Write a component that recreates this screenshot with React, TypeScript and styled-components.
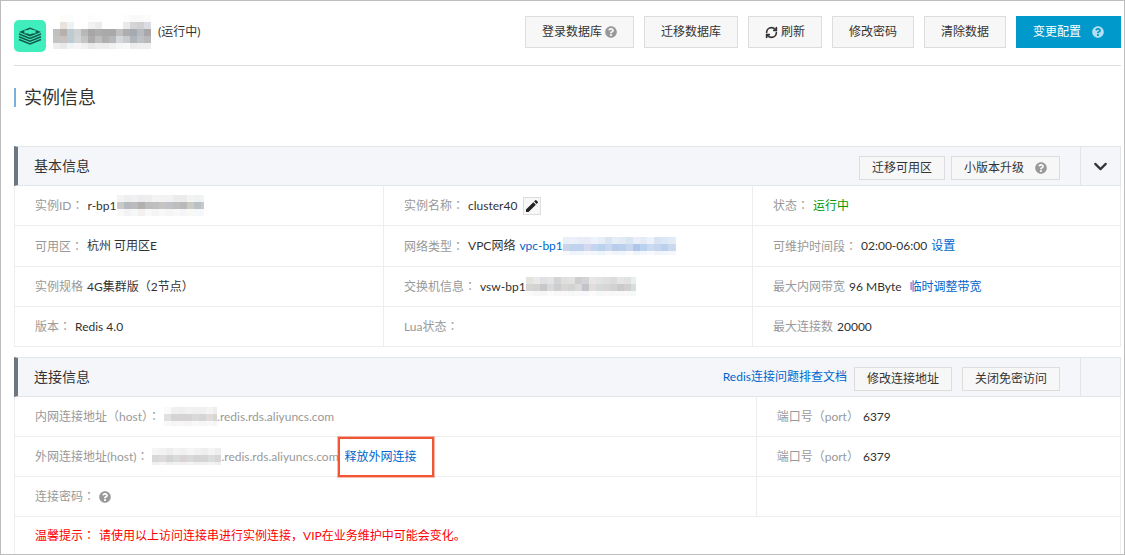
import React from 'react';
import styled, { createGlobalStyle } from 'styled-components';
import { FaQuestionCircle } from 'react-icons/fa';
import { MdEdit } from 'react-icons/md';
import { ChevronDown, RefreshCw } from 'lucide-react';

const GlobalStyle = createGlobalStyle`
  * { box-sizing: border-box; }
  body {
    margin: 0;
    background: #fff;
    color: #333;
    font-family: Lato, "Noto Sans CJK SC", sans-serif;
    font-size: 12px;
    line-height: 18px;
  }
  button { font-family: inherit; }
`;

const Page = styled.main`
  min-height: 100vh;
  padding: 15px 3px 0 13px;
  border: 1px solid #bdbdbd;
`;

const Header = styled.header`
  display: flex;
  justify-content: space-between;
  align-items: flex-start;
  padding-bottom: 13px;
  border-bottom: 1px solid #ddd;
`;

const Identity = styled.div`
  display: flex;
  align-items: flex-start;
  gap: 7px;
`;

const LogoBox = styled.div`
  padding-top: 4px;
  line-height: 0;
`;

const InstanceTitle = styled.div`
  display: flex;
  align-items: center;
  gap: 7px;
  height: 32px;
`;

const Actions = styled.div`
  display: flex;
  gap: 10px;
`;

const ActionButton = styled.button<{ $primary?: boolean; $gap?: number }>`
  display: flex;
  align-items: center;
  gap: ${p => p.$gap ?? 3}px;
  height: 32px;
  padding: 0 16px;
  border: 1px solid ${p => (p.$primary ? '#0099cc' : '#ddd')};
  background: ${p => (p.$primary ? '#0099cc' : '#f7f7f7')};
  color: ${p => (p.$primary ? '#fff' : '#333')};
  font-size: 12px;
  line-height: 18px;
  white-space: nowrap;
`;

const SmallButton = styled(ActionButton)`
  height: 24px;
  margin-top: 4px;
  padding: 0 12px;
`;

const Help = styled(FaQuestionCircle)<{ $light?: boolean }>`
  flex: none;
  width: 12px;
  height: 12px;
  color: ${p => (p.$light ? '#b3e0f0' : '#999')};
`;

const PageTitle = styled.h1`
  margin: 22px 0 39px;
  padding-left: 8px;
  border-left: 2px solid #7cb0dc;
  font-size: 18px;
  font-weight: 400;
  line-height: 19px;
`;

const Panel = styled.section`
  & + & { margin-top: 10px; }
`;

const PanelHeader = styled.div`
  display: flex;
  align-items: stretch;
  height: 40px;
  border: 1px solid #e1e6eb;
  border-left: 4px solid #6d7781;
  background: #f5f6fa;
`;

const PanelTitle = styled.h2`
  align-self: center;
  flex: 1;
  margin: 0;
  padding-left: 16px;
  font-size: 14px;
  font-weight: 400;
  line-height: 20px;
`;

const PanelTools = styled.div`
  display: flex;
  align-items: center;
  gap: 7px;
  margin-right: 20px;
`;

const ButtonGroup = styled.div<{ $gap: number }>`
  display: flex;
  gap: ${p => p.$gap}px;
`;

const PanelEnd = styled.div`
  display: flex;
  width: 40px;
  border-left: 1px solid #e1e6eb;
`;

const ToggleButton = styled.button`
  display: flex;
  flex: 1;
  align-items: center;
  justify-content: center;
  padding: 0;
  border: 0;
  background: none;
  color: #333;
`;

const Table = styled.table`
  width: 100%;
  table-layout: fixed;
  border-collapse: separate;
  border-spacing: 0;
`;

const Col = styled.col<{ $share: string }>`
  width: ${p => p.$share};
`;

const Cell = styled.td<{ $tall?: boolean; $last?: boolean }>`
  height: ${p => (p.$tall ? 41 : p.$last ? 37 : 40)}px;
  padding: 0 0 0 20px;
  border-left: 1px solid #ededed;
  border-bottom: ${p => (p.$last ? '0' : '1px solid #ededed')};
  &:last-child { border-right: 1px solid #ededed; }
`;

const Line = styled.div`
  display: flex;
  align-items: center;
  white-space: nowrap;
`;

const LabelText = styled.span`
  margin-right: 4px;
  color: #999;
`;

const Muted = styled.span`
  color: #999;
`;

const Running = styled.span`
  color: #090;
`;

const Warning = styled.span`
  margin-right: 4px;
  color: #f00;
`;

const Link = styled.a<{ $space?: number }>`
  margin-left: ${p => p.$space ?? 0}px;
  color: #06c;
  text-decoration: none;
`;

const MarkedLink = styled(Link)`
  position: relative;
  &::after {
    content: '';
    position: absolute;
    inset: -11px -17px -11px -7px;
    border: 2px solid #f15533;
    box-shadow: 0 0 0 1px rgba(241, 85, 51, 0.4);
    pointer-events: none;
  }
`;

const EditButton = styled.button`
  display: flex;
  align-items: center;
  justify-content: center;
  width: 18px;
  height: 18px;
  margin-left: 6px;
  padding: 0;
  border: 1px solid #ddd;
  background: #f7f7f7;
  color: #222;
`;

/* The TC face centres full-width colons in their box. */
const CentredMark = styled.span`
  font-family: "Noto Sans CJK TC", sans-serif;
`;

function Wide({ text }: { text: string }) {
  return (
    <span>
      {text.split(/([：（）])/).map((part, i) => (i % 2 ? <CentredMark key={i}>{part}</CentredMark> : part))}
    </span>
  );
}

function Label({ children }: { children: string }) {
  return <LabelText><Wide text={children} /></LabelText>;
}

const MosaicSvg = styled.svg`
  display: block;
  flex: none;
`;

const CELL = 7;

/* Pixelated block hiding a private value; each row is a list of hex shades. */
function Mosaic({ width, height, rows }: { width: number; height: number; rows: string[] }) {
  return (
    <MosaicSvg width={width} height={height} aria-hidden="true" shapeRendering="crispEdges">
      {rows.map((row, y) =>
        row.split(' ').map((shade, x) => (
          <rect key={`${x}-${y}`} x={x * CELL} y={y * CELL} width={CELL} height={CELL} fill={`#${shade}`} />
        )),
      )}
    </MosaicSvg>
  );
}

const NAME = [
  'fff fdfcfb fcfdfd fff fff fdfdfd fdfdfd fff fff fff fcfcfc f9f9f9 f9fafa fcfcfd',
  'fff e9e3de edf2f5 fff fefefe f3f2f1 ececec fefefe fff fefefe ebe9ea d5d5d5 d0d0d2 dbdce4',
  'c0c0be b5b1aa becad0 ced2d2 b8b8b8 a6a6a6 adadad a9a9a9 a9a9a9 c0c0c0 aeaeb0 a5abb3 b9babd a8a8aa',
  'c3c3c1 c9c1bd bccad3 d2d5d5 c4c4c4 adabab bebebe aeb0b0 b5b9be d5d8da cacacc afb5bb bcc1c4 b9b9bb',
  'eeeeee e9e9e9 f1f4f6 f6f6f6 f0f0f0 e9e9e9 eeeeee ececec eef0f2 f5f6f7 f9f9f9 ececec eef0f0 efefef',
];
const INSTANCE_ID = [
  'f3f3f3 eceef0 eff0f2 ececee eeeeec f3f3f3 f3f3f3 f0f2f4 ececec eaecec f3f3f0 eef2f3 f3f3f3',
  'c9c9c9 b5bac0 bcbcbe b5b0b0 bdbdc0 bfbfbf c8c4c4 c0c2c5 bebebe b9b9bb cbcbc4 b9c1c7 c6cacc',
  'f8f8f8 f3f3f5 f5f8f8 f5f0f0 f8f8f8 f5f5f5 f8f8f8 f5f5f5 f8f8f8 f5f5f7 f8f8f5 f5f8fa f8f8f8',
];
const VPC_ID = [
  'e9eff8 eaf1f9 e7edf6 e9ecf6 edf1f9 e7eef8 d9e6f2 e5edf6 e2eaf5 d8e6f3 e9eef8 e5ebf5 edf1f9 d9e3f3 dce7f4 e1eaf5 e5edf6',
  'cad5ec c0d2ec bdd3ee d4d9f0 c5d5ef bbd2ed c9d6ee b9cdea bad0ec c7d7ef b1c5e9 b9d2ed cbdaf0 c4d5ed bad1ee cad9f0 c9dcef',
  'f6f8fd eef4fb f2f6fc f6f7fd f3f7fc eef4fb f6f8fd f0f5fc f1f6fc f7f9fd eff3fb f3f7fc f6f9fd f1f5fb f1f6fc f4f7fc f5f9fd',
];
const SWITCH_ID = [
  'e4e4df e9e9e9 dfe0e2 e3e4e3 d3d5d4 dfdfdf e2e2e0 cececf d3d4d8 e8e5e4 e3e3e3 dfdfe0 dcdcdc e5e5e3 e0e3e2 e8efef',
  'd5d5d3 d3d3d3 cac7ca d7dada cdcece d9d5d5 d2d4d4 dadada c4c3ca e2dcdc d6dad9 d6d6d8 d1d2d2 cacaca d2cfcf d5dfe0',
  'fafafa f7f7f8 f7f7f9 fafafa f8f8f8 f9f9f9 f6f7f7 f9f9f9 f8f8fa fbfbfb f7f8f8 f9f9f9 f8f8f8 f8f8f8 f9f9f9 f6f9f9',
];
const HOST_A = [
  'fafafa f0f0f0 eeeeee f1f1f0 efefef f0f0f0 f4f4f4 eeeeee',
  'e0e0e0 d5d4d5 d8d3d3 d4d4d4 dbd8d8 d4d6d6 e1dbdb d5d5d5',
  'f8f8f8 f5f5f5 f7f7f7 f5f5f5 f8f8f8 f6f6f6 f8f8f8 f5f5f5',
];
const HOST_B = [
  'f5f5f5 f2f2f2 eeeeee f3f3f3 f1f1f1 f5f5f5 f2f2f2 efefef f4f4f4 eeeeee',
  'd8d8d8 dddbdb d2d4d4 dadada d9d4d4 d8d9d9 d4d4d4 d7d4d4 dcdcdc d6d6d6',
  'f0f0f0 f4f4f4 eeeeee f2f2f2 f1efef f3f3f3 efefef f1f1f1 f4f4f4 eeeeee',
];

function Logo() {
  return (
    <svg width="32" height="32" viewBox="0 0 32 32" aria-label="Redis">
      <rect width="32" height="32" rx="5" fill="#40edbc" />
      <path d="M16 7.5 27 12 16 16.4 5 12Z" fill="#135a4b" />
      <path d="M16 9 19 10 22 10.6 21.4 12 21.8 13.2 18 13.6 16 14.6 14 13.6 10.2 13.2 10.6 11.9 10 10.6 14 10Z" fill="#40edbc" />
      <g fill="none" stroke="#135a4b" strokeWidth="1.6">
        <path d="M5 14 16 18.4 27 14" />
        <path d="M5 16.8 16 21.2 27 16.8" />
        <path d="M5 19.6 16 24 27 19.6" />
      </g>
    </svg>
  );
}

export default function App() {
  return (
    <Page>
      <GlobalStyle />
      <Header>
        <Identity>
          <LogoBox><Logo /></LogoBox>
          <InstanceTitle>
            <Mosaic width={98} height={34} rows={NAME} />
            <span>(运行中)</span>
          </InstanceTitle>
        </Identity>
        <Actions>
          <ActionButton>登录数据库<Help /></ActionButton>
          <ActionButton>迁移数据库</ActionButton>
          <ActionButton><RefreshCw size={13} strokeWidth={3} />刷新</ActionButton>
          <ActionButton>修改密码</ActionButton>
          <ActionButton>清除数据</ActionButton>
          <ActionButton $primary $gap={11}>变更配置<Help $light /></ActionButton>
        </Actions>
      </Header>

      <PageTitle>实例信息</PageTitle>

      <Panel>
        <PanelHeader>
          <PanelTitle>基本信息</PanelTitle>
          <PanelTools>
            <ButtonGroup $gap={6}>
              <SmallButton>迁移可用区</SmallButton>
              <SmallButton $gap={11}>小版本升级<Help /></SmallButton>
            </ButtonGroup>
          </PanelTools>
          <PanelEnd>
            <ToggleButton aria-label="收起"><ChevronDown size={21} strokeWidth={2.5} /></ToggleButton>
          </PanelEnd>
        </PanelHeader>
        <Table>
          <tbody>
            <tr>
              <Cell><Line><Label>实例ID：</Label>r-bp1<Mosaic width={87} height={21} rows={INSTANCE_ID} /></Line></Cell>
              <Cell>
                <Line>
                  <Label>实例名称：</Label>cluster40
                  <EditButton aria-label="编辑"><MdEdit size={16} /></EditButton>
                </Line>
              </Cell>
              <Cell><Line><Label>状态：</Label><Running>运行中</Running></Line></Cell>
            </tr>
            <tr>
              <Cell $tall><Line><Label>可用区：</Label>杭州 可用区E</Line></Cell>
              <Cell $tall>
                <Line>
                  <Label>网络类型：</Label>VPC网络<Link href="#vpc" $space={4}>vpc-bp1</Link>
                  <Mosaic width={113} height={18} rows={VPC_ID} />
                </Line>
              </Cell>
              <Cell $tall><Line><Label>可维护时间段：</Label>02:00-06:00<Link href="#window" $space={4}>设置</Link></Line></Cell>
            </tr>
            <tr>
              <Cell><Line><Label>实例规格</Label><Wide text="4G集群版（2节点）" /></Line></Cell>
              <Cell><Line><Label>交换机信息：</Label>vsw-bp1<Mosaic width={110} height={19} rows={SWITCH_ID} /></Line></Cell>
              <Cell><Line><Label>最大内网带宽</Label>96 MByte<Link href="#bandwidth" $space={8}>临时调整带宽</Link></Line></Cell>
            </tr>
            <tr>
              <Cell><Line><Label>版本：</Label>Redis 4.0</Line></Cell>
              <Cell><Line><Label>Lua状态：</Label></Line></Cell>
              <Cell><Line><Label>最大连接数</Label>20000</Line></Cell>
            </tr>
          </tbody>
        </Table>
      </Panel>

      <Panel>
        <PanelHeader>
          <PanelTitle>连接信息</PanelTitle>
          <PanelTools>
            <Link href="#docs">Redis连接问题排查文档</Link>
            <ButtonGroup $gap={10}>
              <SmallButton>修改连接地址</SmallButton>
              <SmallButton>关闭免密访问</SmallButton>
            </ButtonGroup>
          </PanelTools>
          <PanelEnd />
        </PanelHeader>
        <Table>
          <colgroup>
            <Col $share="67%" />
            <Col $share="33%" />
          </colgroup>
          <tbody>
            <tr>
              <Cell>
                <Line>
                  <Label>内网连接地址（host）：</Label>
                  <Mosaic width={53} height={19} rows={HOST_A} />
                  <Muted>.redis.rds.aliyuncs.com</Muted>
                </Line>
              </Cell>
              <Cell><Line><Label>端口号（port）</Label>6379</Line></Cell>
            </tr>
            <tr>
              <Cell>
                <Line>
                  <Label>外网连接地址(host)：</Label>
                  <Mosaic width={69} height={17} rows={HOST_B} />
                  <Muted>.redis.rds.aliyuncs.com</Muted>
                  <MarkedLink href="#release" $space={6}>释放外网连接</MarkedLink>
                </Line>
              </Cell>
              <Cell><Line><Label>端口号（port）</Label>6379</Line></Cell>
            </tr>
            <tr>
              <Cell><Line><Label>连接密码：</Label><Help /></Line></Cell>
              <Cell />
            </tr>
            <tr>
              <Cell colSpan={2} $last>
                <Line>
                  <Warning><Wide text="温馨提示：" /></Warning>
                  <Warning>请使用以上访问连接串进行实例连接，VIP在业务维护中可能会变化。</Warning>
                </Line>
              </Cell>
            </tr>
          </tbody>
        </Table>
      </Panel>
    </Page>
  );
}
